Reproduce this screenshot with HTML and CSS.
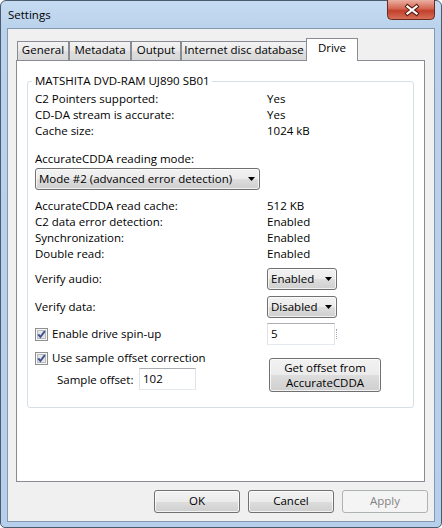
FILE: index.html
```html
<!DOCTYPE html>
<html>
<head>
<meta charset="utf-8">
<link rel="stylesheet" href="styles.css">
</head>
<body>
<div class="window">
  <div class="titlebar">
    <span class="title">Settings</span>
    <div class="close">
      <svg width="48" height="20" viewBox="0 0 48 20">
        <defs>
          <linearGradient id="cg" x1="0" y1="0" x2="0" y2="1">
            <stop offset="0" stop-color="#eab0a3"/>
            <stop offset="0.45" stop-color="#d4644f"/>
            <stop offset="0.55" stop-color="#c23f2b"/>
            <stop offset="1" stop-color="#d7735a"/>
          </linearGradient>
        </defs>
        <path d="M0.5 0 V15.5 Q0.5 19.5 4.5 19.5 H43.5 Q47.5 19.5 47.5 15.5 V0" fill="url(#cg)" stroke="#6b2a22"/>
        <path d="M20.5 6.5 L29.5 13.5 M29.5 6.5 L20.5 13.5" stroke="#5a1e16" stroke-width="4.2" stroke-linecap="square" fill="none"/>
        <path d="M20.5 6.5 L29.5 13.5 M29.5 6.5 L20.5 13.5" stroke="#ffffff" stroke-width="2.2" stroke-linecap="square" fill="none"/>
      </svg>
    </div>
  </div>
  <div class="client">
    <div class="tabs">
      <div class="tab w-general">General</div>
      <div class="tab w-metadata">Metadata</div>
      <div class="tab w-output">Output</div>
      <div class="tab w-internet">Internet disc database</div>
      <div class="tab active w-drive">Drive</div>
    </div>
    <div class="panel">
      <fieldset class="group">
        <legend>MATSHITA DVD-RAM UJ890 SB01</legend>
        <div class="info">
          <span>C2 Pointers supported:</span><span>Yes</span>
          <span>CD-DA stream is accurate:</span><span>Yes</span>
          <span>Cache size:</span><span>1024 kB</span>
        </div>
        <div class="mode-label">AccurateCDDA reading mode:</div>
        <div class="combo wide">
          <span>Mode #2 (advanced error detection)</span>
          <svg class="arrow" width="7" height="4" viewBox="0 0 7 4"><polygon points="0,0 7,0 3.5,4" fill="#000"/></svg>
        </div>
        <div class="info second">
          <span>AccurateCDDA read cache:</span><span>512 KB</span>
          <span>C2 data error detection:</span><span>Enabled</span>
          <span>Synchronization:</span><span>Enabled</span>
          <span>Double read:</span><span>Enabled</span>
        </div>
        <div class="row r-audio">
          <span>Verify audio:</span>
          <div class="combo small">
            <span>Enabled</span>
            <svg class="arrow" width="7" height="4" viewBox="0 0 7 4"><polygon points="0,0 7,0 3.5,4" fill="#000"/></svg>
          </div>
        </div>
        <div class="row r-data">
          <span>Verify data:</span>
          <div class="combo small">
            <span>Disabled</span>
            <svg class="arrow" width="7" height="4" viewBox="0 0 7 4"><polygon points="0,0 7,0 3.5,4" fill="#000"/></svg>
          </div>
        </div>
        <div class="row r-spin">
          <label class="check">
            <svg width="13" height="13" viewBox="0 0 13 13">
              <rect x="0.5" y="0.5" width="12" height="12" fill="#f6f6f6" stroke="#8e8f8f"/>
              <rect x="2.5" y="2.5" width="8" height="8" fill="#e4e6ea" stroke="#b9bdc3"/>
              <path d="M3.2 6.4 L5.4 8.9 L9.9 3.2" fill="none" stroke="#40558a" stroke-width="1.9"/>
            </svg>
            <span>Enable drive spin-up</span>
          </label>
          <div class="spin">
            <div class="edit e-spin">5</div>
            <span class="dots"></span>
          </div>
        </div>
        <div class="offset">
          <div class="offset-left">
            <label class="check">
              <svg width="13" height="13" viewBox="0 0 13 13">
                <rect x="0.5" y="0.5" width="12" height="12" fill="#f6f6f6" stroke="#8e8f8f"/>
                <rect x="2.5" y="2.5" width="8" height="8" fill="#e4e6ea" stroke="#b9bdc3"/>
                <path d="M3.2 6.4 L5.4 8.9 L9.9 3.2" fill="none" stroke="#40558a" stroke-width="1.9"/>
              </svg>
              <span>Use sample offset correction</span>
            </label>
            <div class="sample">
              <span class="sample-label">Sample offset:</span>
              <div class="edit e-offset">102</div>
            </div>
          </div>
          <div class="btn getoffset">Get offset from<br>AccurateCDDA</div>
        </div>
      </fieldset>
    </div>
    <div class="buttons">
      <div class="btn dlg">OK</div>
      <div class="btn dlg">Cancel</div>
      <div class="btn dlg disabled">Apply</div>
    </div>
  </div>
</div>
</body>
</html>
```

FILE: styles.css
```css
* { box-sizing: border-box; }
html, body { margin: 0; padding: 0; }
body {
  width: 442px;
  height: 528px;
  overflow: hidden;
  font-family: "Open Sans", "Noto Sans", sans-serif;
  font-size: 11.5px;
  color: #000;
  background: #ffffff;
}

.window {
  width: 442px;
  height: 528px;
  border: 1px solid #4b5b6e;
  border-radius: 6px 6px 5px 5px;
  background: linear-gradient(180deg, #c5dbf2 0px, #bad2eb 28px, #b6cfea 100%);
  padding: 0 6px 5px 6px;
  display: flex;
  flex-direction: column;
}

.titlebar {
  height: 27px;
  display: flex;
  justify-content: space-between;
  align-items: flex-start;
  flex: none;
}
.title {
  padding: 6px 0 0 1px;
  line-height: 16px;
  font-size: 11.5px;
}
.close {
  margin-top: -1px;
  width: 48px;
  height: 20px;
}
.close svg { display: block; }

.client {
  flex: 1;
  background: #f0f0f0;
  border: 1px solid #8498b0;
  display: flex;
  flex-direction: column;
}

.tabs {
  display: flex;
  align-items: flex-end;
  height: 23px;
  margin: 9px 0 -1px 9px;
  position: relative;
  z-index: 1;
}
.tab {
  height: 19px;
  margin-bottom: 1px;
  border: 1px solid #898c95;
  border-bottom: none;
  background: linear-gradient(180deg, #f3f3f3 0%, #e9e9e9 50%, #dedede 51%, #d8d8d8 100%);
  text-align: center;
  line-height: 16px;
  white-space: nowrap;
}
.tab.active {
  height: 23px;
  margin-bottom: 0;
  margin-left: -1px;
  background: #ffffff;
  padding-top: 1px;
}
.w-general { width: 52px; }
.w-metadata { width: 62px; }
.w-output { width: 50px; }
.w-internet { width: 126px; }
.w-drive { width: 52px; }

.panel {
  margin-left: 8px;
  width: 409px;
  height: 422px;
  border: 1px solid #898c95;
  background: #ffffff;
  padding: 12px 10px 0 10px;
  flex: none;
}

.group {
  margin: 0;
  min-width: 0;
  border: 1px solid #d5dfe5;
  border-radius: 3px;
  padding: 2px 7px 15px 7px;
}
.group legend {
  padding: 0 2px 0 3px;
  margin-left: -3px;
  line-height: 16px;
}

.info {
  display: grid;
  grid-template-columns: 232px auto;
  line-height: 16px;
}
.info.second { margin-top: 8px; }

.mode-label {
  margin-top: 12px;
  line-height: 16px;
}

.combo {
  display: flex;
  align-items: center;
  justify-content: space-between;
  height: 22px;
  border: 1px solid #707070;
  border-radius: 3px;
  background: linear-gradient(180deg, #f2f2f2 0%, #ebebeb 50%, #dddddd 51%, #cfcfcf 100%);
  box-shadow: inset 0 0 0 1px rgba(255,255,255,0.7);
  padding: 0 4px 0 3px;
  line-height: 16px;
  white-space: nowrap;
}
.combo.wide { width: 225px; margin-top: 1px; }
.combo.small { width: 70px; }
.arrow { display: block; flex: none; }

.row {
  display: grid;
  grid-template-columns: 232px auto;
  align-items: center;
  line-height: 16px;
}
.r-audio { margin-top: 6px; }
.r-data { margin-top: 6px; }
.r-spin { margin-top: 5px; }

.check {
  display: flex;
  align-items: center;
  gap: 4px;
  line-height: 16px;
  white-space: nowrap;
}
.check svg { display: block; flex: none; }

.spin { display: flex; align-items: center; }
.edit {
  height: 22px;
  background: #ffffff;
  border: 1px solid #e2e3ea;
  border-top-color: #abadb3;
  border-bottom-color: #e3e9ef;
  padding-left: 3px;
  line-height: 20px;
}
.e-spin { width: 68px; }
.dots {
  width: 1px;
  height: 10px;
  margin-left: 1px;
  border-left: 1px dotted #9aa6b8;
}

.offset {
  display: grid;
  grid-template-columns: 232px auto;
  align-items: start;
  margin-top: 5px;
}
.sample {
  display: flex;
  align-items: center;
  margin-top: 2px;
  padding-left: 22px;
}
.sample-label { width: 82px; }
.e-offset { width: 57px; }

.btn {
  border: 1px solid #707070;
  border-radius: 3px;
  background: linear-gradient(180deg, #f2f2f2 0%, #ebebeb 50%, #dddddd 51%, #cfcfcf 100%);
  box-shadow: inset 0 0 0 1px rgba(255,255,255,0.75);
  text-align: center;
  white-space: nowrap;
}
.getoffset {
  margin: 8px 0 0 2px;
  width: 112px;
  height: 34px;
  line-height: 15px;
  padding-top: 1px;
}

.buttons {
  display: flex;
  justify-content: flex-end;
  gap: 8px;
  margin: 8px 6px 0 0;
}
.dlg {
  width: 86px;
  height: 23px;
  line-height: 20px;
}
.dlg.disabled {
  border-color: #adb2b5;
  background: #f4f4f4;
  box-shadow: none;
  color: #838383;
}
```
